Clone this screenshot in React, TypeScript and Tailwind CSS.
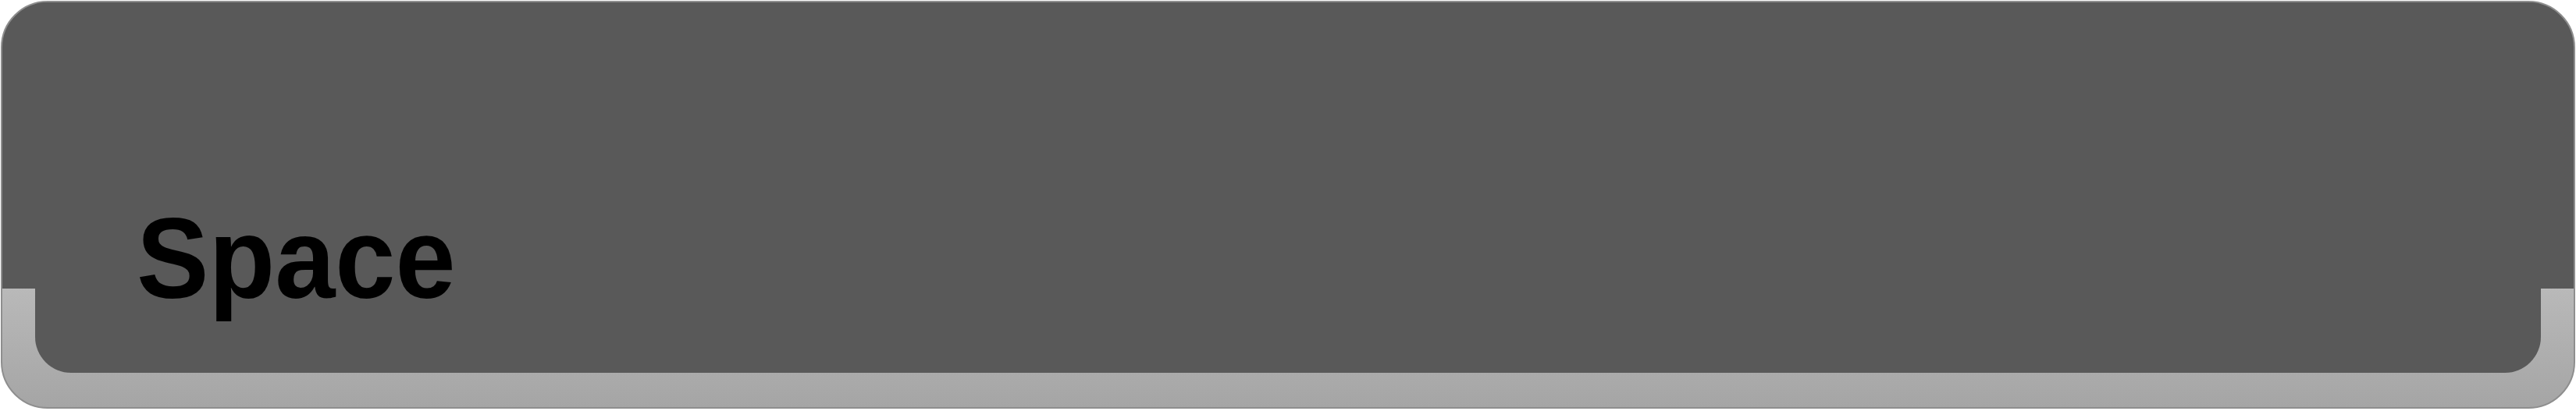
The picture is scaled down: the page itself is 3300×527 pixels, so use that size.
export default function App() {
  return (
    <div className="w-[3300px] h-[527px] bg-white p-px">
      {/* Keycap: outer skirt with lighter bottom edge */}
      <div className="h-[523px] w-full rounded-[60px] border-2 border-[#8e8e8e] overflow-hidden bg-[linear-gradient(to_bottom,#595959_367px,#b9b9b9_367px,#a5a5a5)] px-[42px]">
        {/* Top face */}
        <div className="h-[475px] bg-[#595959] rounded-b-[46px] pl-[130px] pt-[256px]">
          <span className="block font-['Liberation_Sans',Arial,sans-serif] font-bold text-[146px] leading-none text-black origin-left scale-x-[0.95]">
            Space
          </span>
        </div>
      </div>
    </div>
  );
}
